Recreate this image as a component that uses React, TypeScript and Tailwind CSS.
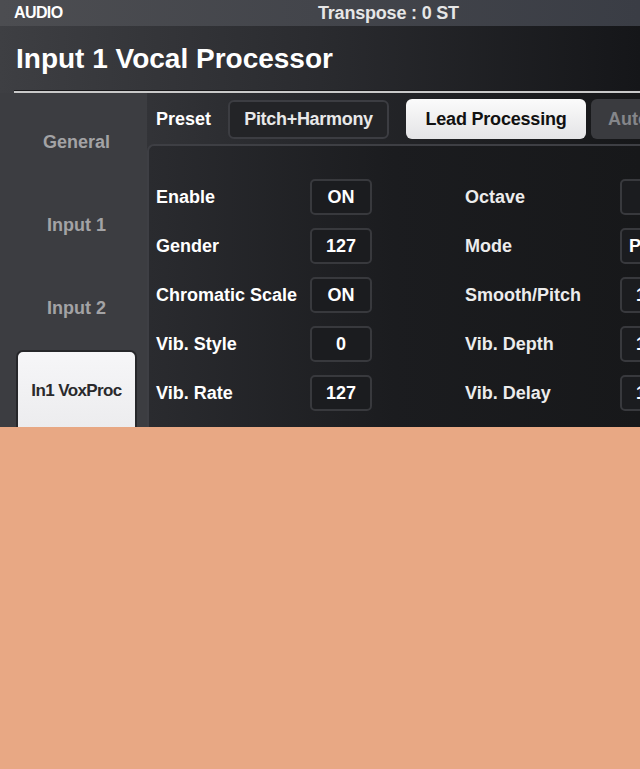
import React from 'react'

const font = { fontFamily: '"Liberation Sans", Arial, sans-serif' }

const leftRows = [
  { label: 'Enable', value: 'ON' },
  { label: 'Gender', value: '127' },
  { label: 'Chromatic Scale', value: 'ON' },
  { label: 'Vib. Style', value: '0' },
  { label: 'Vib. Rate', value: '127' },
]

const rightRows = [
  { label: 'Octave', value: '' },
  { label: 'Mode', value: 'Pitch' },
  { label: 'Smooth/Pitch', value: '127' },
  { label: 'Vib. Depth', value: '127' },
  { label: 'Vib. Delay', value: '127' },
]

const sideItems = ['General', 'Input 1', 'Input 2']

function ValueBox({ value }: { value: string }) {
  return (
    <div className="w-[62px] h-[36px] shrink-0 rounded-[5px] border-2 border-[#38393d] bg-[#1b1c1f] flex items-center justify-center text-[18px] font-bold text-white">
      {value}
    </div>
  )
}

export default function App() {
  return (
    <div className="w-[640px] h-[769px] bg-[#e8a884] overflow-hidden" style={font}>
      <div className="h-[427px] overflow-hidden flex flex-col">
        {/* status bar */}
        <div className="h-[26px] shrink-0 flex items-center bg-gradient-to-r from-[#4c4d51] to-[#3a3d45] text-white font-bold text-[16px]">
          <span className="pl-[14px] w-[318px] tracking-[-0.6px]">AUDIO</span>
          <span className="text-[18px] text-[#e6e6e6] tracking-[-0.2px]">Transpose : 0 ST</span>
        </div>

        {/* title */}
        <div className="shrink-0 bg-gradient-to-r from-[#3e3f43] via-[#2a2b2f] to-[#151619]">
          <div className="h-[64px] flex items-center pl-[16px] pt-[2px]">
            <h1 className="text-[28px] font-bold text-white">Input 1 Vocal Processor</h1>
          </div>
          <div className="ml-[14px] border-t border-[#1a1a1c] h-[3px] bg-[#c9c9c9]" />
        </div>

        {/* body */}
        <div className="flex-1 flex bg-gradient-to-r from-[#3d3e42] via-[#26272b] to-[#161719]">
          {/* sidebar */}
          <div className="w-[147px] shrink-0 pl-[16px] pt-[10px] flex flex-col gap-[5px] bg-[#3c3d41]">
            {sideItems.map((s) => (
              <div key={s} className="w-[121px] h-[78px] flex items-center justify-center text-[18px] font-bold text-[#a3a3a5]">
                {s}
              </div>
            ))}
            <div className="w-[121px] h-[82px] -mt-[2px] rounded-t-[7px] bg-gradient-to-b from-[#f6f6f8] to-[#ececee] border-2 border-[#26272a] flex items-center justify-center text-[17px] font-bold text-[#2a2a2c] tracking-[-0.6px]">
              In1 VoxProc
            </div>
          </div>

          {/* main */}
          <div className="flex-1 flex flex-col min-w-0">
            <div className="h-[51px] shrink-0 flex items-center pt-[1px]">
              <span className="ml-[9px] w-[72px] text-[18px] font-bold text-white">Preset</span>
              <div className="w-[161px] h-[39px] rounded-[6px] border-2 border-[#3c3d42] bg-[#232427] flex items-center justify-center text-[18px] font-bold text-[#e8e8e8] tracking-[-0.3px]">
                Pitch+Harmony
              </div>
              <div className="ml-[17px] w-[180px] h-[40px] rounded-[6px] bg-gradient-to-b from-[#fbfbfb] to-[#e4e4e6] flex items-center justify-center text-[18px] font-bold text-[#111] tracking-[-0.2px]">
                Lead Processing
              </div>
              <div className="ml-[5px] flex-1 h-[40px] rounded-l-[6px] bg-[#3a3b3f] flex items-center pl-[17px] text-[18px] font-bold text-[#85868a] whitespace-nowrap overflow-hidden">
                Auto
              </div>
            </div>

            <div className="flex-1 rounded-tl-[7px] border-l-2 border-t-2 border-[#3e3f44] bg-gradient-to-r from-[#2a2b2f] via-[#1b1c1f] to-[#17181a] pt-[33px] pl-[7px] flex overflow-hidden">
              <div className="w-[309px] shrink-0 flex flex-col gap-[13px]">
                {leftRows.map((r) => (
                  <div key={r.label} className="h-[36px] flex items-center">
                    <span className="w-[154px] text-[18px] font-bold text-white whitespace-nowrap">{r.label}</span>
                    <ValueBox value={r.value} />
                  </div>
                ))}
              </div>
              <div className="flex flex-col gap-[13px]">
                {rightRows.map((r) => (
                  <div key={r.label} className="h-[36px] flex items-center">
                    <span className="w-[155px] shrink-0 text-[18px] font-bold text-[#ececec] whitespace-nowrap">{r.label}</span>
                    <ValueBox value={r.value} />
                  </div>
                ))}
              </div>
            </div>
          </div>
        </div>
      </div>
    </div>
  )
}
